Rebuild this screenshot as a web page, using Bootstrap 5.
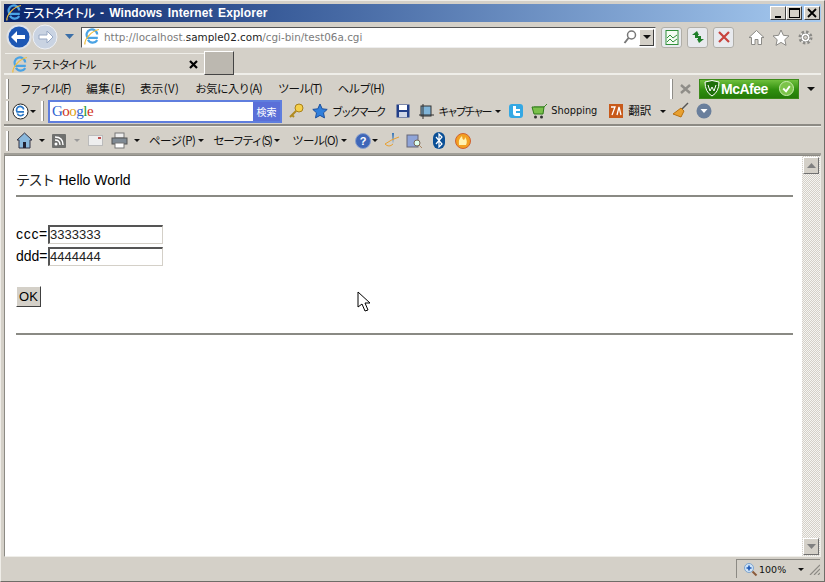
<!DOCTYPE html>
<html lang="ja">
<head>
<meta charset="utf-8">
<title>テストタイトル</title>
<link href="https://cdn.jsdelivr.net/npm/bootstrap@5.3.0/dist/css/bootstrap.min.css" rel="stylesheet">
<style>
html,body{margin:0;height:582px;overflow:hidden}
body{width:825px;background:#d4d0c8;font-family:"Noto Sans CJK JP","Liberation Sans",sans-serif;font-size:11.5px;color:#111;line-height:1;position:relative}
svg{display:block;flex:none}
.win{height:582px;border:1px solid #6f6d68;border-top-color:#efede8;border-left-color:#efede8;padding:3px;display:flex;flex-direction:column}
.ttl{height:18px;background:linear-gradient(90deg,#0a246a 0,#3c5f9c 35%,#a6caf0 100%);color:#fff;font:bold 12px/18px "Liberation Sans","Noto Sans CJK JP",sans-serif;letter-spacing:.1px;padding-left:1px;padding-right:1px;flex:none}
.ttl .jp{font-family:"Noto Sans CJK JP",sans-serif;font-weight:500;font-size:12px;letter-spacing:-2px}
.ttx{margin-left:7px;word-spacing:2px}
.ttx i{font-style:normal;margin-right:5px}
.wb{width:16px;height:14px;background:#d4d0c8;border:1px solid;border-color:#fff #404040 #404040 #fff;color:#000;display:flex;align-items:center;justify-content:center}
.gp2{margin-left:2px}
.adr{height:27px;flex:none;padding-left:2px;padding-top:3px}
.abox{width:575px;height:21px;margin-left:6px;background:#fff;border:1px solid;border-color:#555 #eee #eee #555;color:#7b7b7b;font-size:10.4px;font-family:"DejaVu Sans","Noto Sans CJK JP",sans-serif}
.abox b{font-weight:400;color:#222}
.sq{width:21px;height:21px;border:1px solid #b0aea8;border-radius:3px;background:#e8eaee;display:flex;align-items:center;justify-content:center;margin-left:5px}
.tabs{height:26px;flex:none;border-bottom:2px solid #efeee9}
.tab{width:199px;height:22px;margin-top:4px;margin-left:1px;border-top:1px solid #efeee9;padding-left:6px;font-size:11px;letter-spacing:-2.1px}
.ntab{width:30px;height:24px;margin-top:2px;background:#bcb8b0;border:1px solid;border-color:#fff #444 #444 #fff}
.row1{height:25px;flex:none;padding-top:2px}
.row2{height:26px;flex:none;border-bottom:2px solid #8c8a84;padding-bottom:2px}
.row3{height:29px;flex:none;border-bottom:2px solid #a09e97;box-shadow:inset 0 1px 0 #efeee9;padding-top:2px}
.grip{width:2px;height:20px;margin-left:2px;background:#fff;border-right:1px solid #7f7d78;box-sizing:content-box;flex:none}
.sep{width:2px;height:20px;background:#fff;border-right:1px solid #8f8d88;box-sizing:content-box;flex:none}
.caret{width:0;height:0;border:3px solid transparent;border-top-color:#111;border-bottom:0;flex:none}
.gbox{width:234px;height:23px;background:#fff;border:2px solid #5f7ede;margin-left:4px;padding-left:2px;font:400 15px/19px "Liberation Serif",serif;letter-spacing:-.5px}
.gbtn{margin-left:auto;width:27px;height:19px;background:#5a6fd8;color:#fff;font:10px/19px "Noto Sans CJK JP",sans-serif;text-align:center;letter-spacing:0}
.mca{width:100px;height:20px;background:linear-gradient(#6fbf3c,#2f8f0e 55%,#247a08);border:1px solid #3c8a1a;color:#fff;font:bold 14px/18px "Liberation Sans",sans-serif;letter-spacing:-.5px;padding-left:4px}
.main{flex:1;min-height:0;border:1px solid;border-color:#8c8a84 #efeee9 #efeee9 #8c8a84;background:#fff;display:flex}
.page{flex:1;padding:0 9px 0 11px;color:#000;font:14px/1 "Liberation Sans",sans-serif}
.hh{height:41px;border-bottom:2px solid #8a8a84;padding-top:16px}
.hh span{font-family:"Noto Sans CJK JP",sans-serif;font-weight:400;color:#222;letter-spacing:-1.5px;margin-right:5px}
.fr{height:22px}
.fr label{width:32px;flex:none}
.lc{letter-spacing:.7px}
.fr input{width:115px;height:19px;border:2px solid;border-color:#555 #d4d0c8 #d4d0c8 #555;border-right-width:1px;border-bottom-width:1px;padding:0;font:13px/16px "Liberation Sans",sans-serif;color:#222;outline:0}
.fr1{margin-top:26px}
.okb{display:block;width:25px;height:21px;padding:0;margin-top:19px;border-radius:0;background:#d4d0c8;border:1px solid;border-color:#fff #404040 #404040 #fff;font:13px/18px "Liberation Sans",sans-serif;color:#000}
.hh2{border-bottom:2px solid #8a8a84;margin-top:26px}
.sb{width:18px;background:repeating-conic-gradient(#d4d0c8 0 25%,#f6f5f2 0 50%) 0 0/2px 2px;display:flex;flex-direction:column;justify-content:space-between}
.sbb{height:17px;margin:1px;background:#d4d0c8;border:1px solid;border-color:#fff #707070 #707070 #fff;display:flex;align-items:center;justify-content:center}
.stat{height:21px;flex:none}
.zm{margin-left:auto;width:84px;height:19px;margin-top:2px;margin-right:1px;border-left:1px solid #8c8a84;border-top:1px solid #8c8a84;font:9.5px/17px "DejaVu Sans",sans-serif;padding-left:6px}
.cur{position:absolute;left:357px;top:291px}
.m1{margin-left:1px}.m3{margin-left:3px}.m4{margin-left:4px}.m5{margin-left:5px}.m6{margin-left:6px}.m7{margin-left:7px}.m8{margin-left:8px}.m9{margin-left:9px}.m10{margin-left:10px}.m11{margin-left:11px}.m12{margin-left:12px}.m14{margin-left:14px}.m16{margin-left:16px}
.r{margin-left:auto}
.tk{font-size:11px;letter-spacing:-2.3px}
.a1{letter-spacing:-1.4px}.a2{letter-spacing:.4px}.a3{letter-spacing:-.7px}.a4{letter-spacing:-.9px}.a5{letter-spacing:-.7px}.a6{letter-spacing:-.5px}.a7{letter-spacing:-1.6px}.a8{letter-spacing:-.9px}
.shp{font-family:"DejaVu Sans",sans-serif;font-size:9.8px}
</style>
</head>
<body>
<svg width="0" height="0" style="position:absolute" aria-hidden="true"><symbol id="ielogo" viewBox="0 0 18 18"><path d="M14.800 9.800H4.600A5.300 5.300 0 1 1 14.200 6.500M14.300 12.200A5.400 5.400 0 0 1 5 11.800" fill="none" stroke="#4aa3e4" stroke-width="2.200"/><path d="M2 16.500C1 12 8 3 16 1.500" fill="none" stroke="#efbf3f" stroke-width="1.200"/></symbol></svg>
<div class="win">
  <div class="ttl d-flex align-items-center">
    <svg width="18" height="18"><use href="#ielogo"/></svg>
    <span class="jp">テストタイトル</span><span class="ttx"><i>-</i>Windows Internet Explorer</span>
    <div class="wb r"><svg width="9" height="9"><rect x="1" y="7" width="6" height="2" fill="#000"/></svg></div>
    <div class="wb"><svg width="11" height="10"><rect x=".5" y="1" width="10" height="8.500" fill="none" stroke="#000"/><rect y="0" width="11" height="2" fill="#000"/></svg></div>
    <div class="wb gp2"><svg width="10" height="10"><path d="M1 1l8 8M9 1l-8 8" stroke="#000" stroke-width="1.800"/></svg></div>
  </div>
  <div class="adr d-flex align-items-center">
    <svg width="26" height="26" viewBox="0 0 26 26"><circle cx="13" cy="13" r="12.500" fill="#dfe2e8"/><circle cx="13" cy="13" r="10.500" fill="#1d57b4"/><path d="M5 13l6-6v4h8v4h-8v4z" fill="#fff"/></svg>
    <svg width="26" height="26" viewBox="0 0 26 26"><circle cx="13" cy="13" r="12" fill="#c9d3e2" stroke="#eef0f4"/><path d="M21 13l-6-6v4H7v4h8v4z" fill="#fff" stroke="#97a8c4"/></svg>
    <svg class="m6" width="11" height="8" viewBox="0 0 11 8"><path d="M1 1h9L5.500 6z" fill="#3b6fa8"/></svg>
    <div class="abox d-flex align-items-center">
      <svg class="m1" width="18" height="18"><use href="#ielogo"/></svg>
      <span class="m3 text-nowrap">http://localhost.<b>sample02.com</b>/cgi-bin/test06a.cgi</span>
      <svg class="r" width="16" height="16" viewBox="0 0 16 16"><circle cx="9.500" cy="6" r="4" fill="none" stroke="#777" stroke-width="1.500"/><path d="M6.500 9l-4 5" stroke="#777" stroke-width="2"/></svg>
      <div class="wb" style="width:15px;height:17px;margin:0 1px"><span class="caret" style="border-width:4px;border-bottom:0"></span></div>
    </div>
    <div class="sq"><svg width="14" height="15" viewBox="0 0 14 15"><rect x="1" y=".5" width="12" height="14" fill="#f4fbf2" stroke="#2f8f3a"/><path d="M2 8l3-3 3 3 4-3M2 12l3-3 3 3 4-3" fill="none" stroke="#2f8f3a"/></svg></div>
    <div class="sq"><svg width="16" height="14" viewBox="0 0 16 14"><path d="M7 1L2 5h3v3h3V5h1zM9 13l5-4h-3V6H8v3H7z" fill="#1f7f2a"/></svg></div>
    <div class="sq"><svg width="12" height="12" viewBox="0 0 12 12"><path d="M1 1l10 10M11 1L1 11" stroke="#c8433d" stroke-width="2.200"/></svg></div>
    <svg style="margin-left:14px" width="17" height="17" viewBox="0 0 17 17"><path d="M8.500 1.500L1 8.500h2.500v7h3.500v-5h3v5h3.500v-7H16z" fill="#fff" stroke="#8b8a86"/></svg>
    <svg style="margin-left:7px" width="18" height="17" viewBox="0 0 18 17"><path d="M9 1l2.400 5.300 5.600.6-4.200 3.800 1.200 5.700L9 13.400 4 16.400l1.200-5.700L1 6.900l5.600-.6z" fill="#fff" stroke="#8b8a86"/></svg>
    <svg style="margin-left:7px" width="17" height="17" viewBox="0 0 17 17"><circle cx="8.500" cy="8.500" r="5.500" fill="#fff" stroke="#8b8a86" stroke-width="3" stroke-dasharray="2.300 2"/><circle cx="8.500" cy="8.500" r="4.500" fill="#fff" stroke="#8b8a86"/><circle cx="8.500" cy="8.500" r="2" fill="#d4d0c8" stroke="#8b8a86"/></svg>
  </div>
  <div class="tabs d-flex">
    <div class="tab d-flex align-items-center">
      <svg width="18" height="18"><use href="#ielogo"/></svg>
      <span class="m3">テストタイトル</span>
      <svg class="r" style="margin-right:6px" width="9" height="9"><path d="M1 1l7 7M8 1L1 8" stroke="#000" stroke-width="2.200"/></svg>
    </div>
    <div class="ntab"></div>
  </div>
  <div class="row1 d-flex align-items-center">
    <span class="grip"></span>
    <span class="m11 a1">ファイル(F)</span><span class="m16 a2">編集(E)</span><span class="m14 a2">表示(V)</span><span class="m16 a3">お気に入り(A)</span><span class="m16 a4">ツール(T)</span><span class="m16 a5">ヘルプ(H)</span>
    <span class="sep r"></span>
    <svg class="m7" width="11" height="10"><path d="M1 1l9 8M10 1L1 9" stroke="#8f8d88" stroke-width="2.400"/></svg>
    <div class="mca m8 d-flex align-items-center">
      <svg width="16" height="17" viewBox="0 0 16 17"><path d="M1 2q7-3 14 0 0 10-7 14Q1 12 1 2z" fill="#1f6f0b" stroke="#fff"/><path d="M4 5l2 6 2-4 2 4 2-6" fill="none" stroke="#fff"/></svg>
      <span class="m1">McAfee</span>
      <svg class="r" style="margin-right:4px" width="15" height="15" viewBox="0 0 16 16"><circle cx="8" cy="8" r="7.500" fill="#7cc44a" stroke="#cfeeb4"/><path d="M4.500 8l3 3 4-5.500" fill="none" stroke="#fff" stroke-width="2"/></svg>
    </div>
    <span class="caret m8" style="border-width:4px;border-bottom:0;margin-right:6px"></span>
  </div>
  <div class="row2 d-flex align-items-center">
    <span class="grip"></span>
    <svg class="m3" width="17" height="17" viewBox="0 0 17 17"><circle cx="8.500" cy="8.500" r="7.500" fill="#fff" stroke="#222"/><path d="M12 8.800H5A3.600 3.600 0 1 1 11.700 6.500M11.700 11A3.600 3.600 0 0 1 5.300 10.500" fill="none" stroke="#2a78c8" stroke-width="1.700"/></svg>
    <span class="caret m1"></span>
    <span class="sep m5"></span>
    <div class="gbox d-flex align-items-center">
      <span><span style="color:#2f5fd0">G</span><span style="color:#d03020">o</span><span style="color:#e0a010">o</span><span style="color:#2f5fd0">g</span><span style="color:#2a9a30">l</span><span style="color:#d03020">e</span></span>
      <span class="gbtn">検索</span>
    </div>
    <svg class="m6" width="16" height="16" viewBox="0 0 16 16"><circle cx="11" cy="5" r="4" fill="#f5d04a" stroke="#a8801a"/><path d="M8 8l-6 6M4 12l2 2" stroke="#b08a20" stroke-width="2"/></svg>
    <svg class="m8" width="16" height="16" viewBox="0 0 16 16"><path d="M8 1l2.200 4.800 5 .6-3.700 3.400 1 5.100L8 12.400 3.500 14.900l1-5.100L.8 6.400l5-.6z" fill="#2f7fdc" stroke="#1d4f9c"/></svg>
    <span class="m4 tk">ブックマーク</span>
    <svg class="m12" width="14" height="14" viewBox="0 0 14 14"><rect x=".5" y=".5" width="13" height="13" fill="#223f88"/><rect x="3" y="1" width="8" height="5" fill="#fff"/><rect x="3" y="8" width="8" height="5" fill="#cfd6e6"/></svg>
    <svg class="m9" width="15" height="15" viewBox="0 0 15 15"><rect x="2" y="2" width="10" height="10" fill="#7fb4d8" stroke="#333"/><path d="M4 0v15M0 11h15" stroke="#333"/></svg>
    <span class="m4 tk">キャプチャー</span>
    <span class="caret m5"></span>
    <svg class="m8" width="14" height="14" viewBox="0 0 14 14"><rect width="14" height="14" rx="3" fill="#34a8e4"/><path d="M4 2v7q0 3 3 3h4V9H7V7h4V5H7V2z" fill="#fff"/></svg>
    <svg class="m8" width="16" height="15" viewBox="0 0 16 15"><path d="M3 3h10l3-3" fill="none" stroke="#3a8a20"/><path d="M1 3h12l-1 7H3z" fill="#7ac04a" stroke="#2f7a1a"/><circle cx="4.500" cy="13" r="1.500" fill="#333"/><circle cx="10.500" cy="13" r="1.500" fill="#333"/></svg>
    <span class="m4 shp">Shopping</span>
    <svg class="m12" width="14" height="14" viewBox="0 0 14 14"><rect width="14" height="14" fill="#c85a1a"/><path d="M2 3h4L3 11M8 11l2-8 2 8" fill="none" stroke="#fff" stroke-width="1.300"/></svg>
    <span class="m5">翻訳</span>
    <span class="caret m9"></span>
    <svg class="m6" width="18" height="18" viewBox="0 0 18 18"><path d="M16 1L9 8" stroke="#555" stroke-width="1.500"/><path d="M9 6l3 3-3 6-8-3z" fill="#e8a030" stroke="#b87010"/></svg>
    <svg class="m6" width="16" height="16" viewBox="0 0 16 16"><circle cx="8" cy="8" r="7.500" fill="#6a7f9c"/><path d="M4.500 6h7L8 10z" fill="#fff"/></svg>
  </div>
  <div class="row3 d-flex align-items-center">
    <span class="grip"></span>
    <svg class="m7" width="17" height="17" viewBox="0 0 17 17"><path d="M8.500 1L1 8h2v8h11V8h2z" fill="#8ab8dc" stroke="#334"/><rect x="7" y="10" width="3" height="6" fill="#223"/></svg>
    <span class="caret m6"></span>
    <svg class="m7" width="14" height="14" viewBox="0 0 14 14"><rect width="14" height="14" rx="1" fill="#6f706e"/><circle cx="4" cy="10" r="1.500" fill="#fff"/><path d="M3 6q5 0 5 5M3 3q8 0 8 8" fill="none" stroke="#fff" stroke-width="1.400"/></svg>
    <span class="caret m8" style="border-top-color:#999"></span>
    <svg class="m8" width="15" height="13" viewBox="0 0 15 13"><rect x=".5" y="1.500" width="14" height="10" fill="#eee" stroke="#bbb"/><rect x="10" y="3" width="3" height="2" fill="#c05050"/></svg>
    <svg class="m8" width="17" height="17" viewBox="0 0 17 17"><rect x="4" y="1" width="9" height="5" fill="#eee" stroke="#777"/><rect x="1" y="6" width="15" height="6" fill="#7f8a94" stroke="#555"/><rect x="4" y="11" width="9" height="5" fill="#fff" stroke="#777"/></svg>
    <span class="caret m6"></span>
    <span class="m9 a6">ページ(P)</span>
    <span class="caret m3"></span>
    <span class="m9 a7">セーフティ(S)</span>
    <span class="caret m3"></span>
    <span class="m12 a8">ツール(O)</span>
    <span class="caret m3"></span>
    <svg class="m8" width="16" height="16" viewBox="0 0 16 16"><circle cx="8" cy="8" r="7.500" fill="#3f67b8" stroke="#8aa0cc"/><text x="8" y="12" text-anchor="middle" fill="#fff" font-family="Liberation Sans" font-weight="700" font-size="11">?</text></svg>
    <span class="caret m1"></span>
    <svg class="m6" width="16" height="17" viewBox="0 0 16 17"><path d="M8 1l2 0-1 11z" fill="#3a78b8"/><path d="M1 12q7-5 14-7M1 12q4 4 8 0" fill="none" stroke="#e8a030"/></svg>
    <svg class="m6" width="16" height="17" viewBox="0 0 16 17"><rect x="1" y="3" width="11" height="12" fill="#8fa4d8" stroke="#667"/><circle cx="11" cy="11" r="3" fill="#dfe" stroke="#765"/><path d="M13 13l3 3" stroke="#a86"/></svg>
    <svg class="m11" width="12" height="17" viewBox="0 0 12 17"><rect width="12" height="17" rx="6" fill="#0a4f96"/><path d="M3 5l6 7-3 3V2l3 3-6 7" fill="none" stroke="#fff" stroke-width="1.200"/></svg>
    <svg class="m10" width="16" height="16" viewBox="0 0 16 16"><circle cx="8" cy="8" r="7.500" fill="#f2a020" stroke="#d06030"/><path d="M4 12q-1-6 3-9 0 3 2 4 1-1 1-3 3 4 1 8z" fill="#fff2b0"/></svg>
  </div>
  <div class="main">
    <div class="page">
      <div class="hh"><span>テスト</span>Hello World</div>
      <div class="fr fr1 d-flex align-items-center"><label class="lc" for="fc">ccc=</label><input id="fc" type="text" value="3333333"></div>
      <div class="fr d-flex align-items-center"><label for="fd">ddd=</label><input id="fd" type="text" value="4444444"></div>
      <button class="btn okb" type="button">OK</button>
      <div class="hh2"></div>
    </div>
    <div class="sb">
      <div class="sbb"><svg width="9" height="5"><path d="M4.500 0L9 5H0z" fill="#808080"/></svg></div>
      <div class="sbb"><svg width="9" height="5"><path d="M0 0h9L4.500 5z" fill="#808080"/></svg></div>
    </div>
  </div>
  <div class="stat d-flex">
    <div class="zm d-flex align-items-center">
      <svg width="15" height="15" viewBox="0 0 15 15"><circle cx="6" cy="6" r="4.500" fill="#cfe4f8" stroke="#7fa4cc"/><path d="M3.500 6h5M6 3.500v5" stroke="#1d57b4" stroke-width="1.600"/><path d="M9.500 9.500l4 4" stroke="#8a5a3a" stroke-width="2"/></svg>
      <span class="m1">100%</span>
      <span class="caret m12"></span>
      <svg class="r" width="11" height="11" viewBox="0 0 11 11"><path d="M11 1L1 11M11 5l-6 6M11 9l-2 2" stroke="#8c8a84" stroke-width="1.200"/></svg>
    </div>
  </div>
</div>
<svg class="cur" width="14" height="22" viewBox="0 0 14 22"><path d="M1 1v15l4-3 3 7 3-1-3-7h5z" fill="#fff" stroke="#000"/></svg>
</body>
</html>
